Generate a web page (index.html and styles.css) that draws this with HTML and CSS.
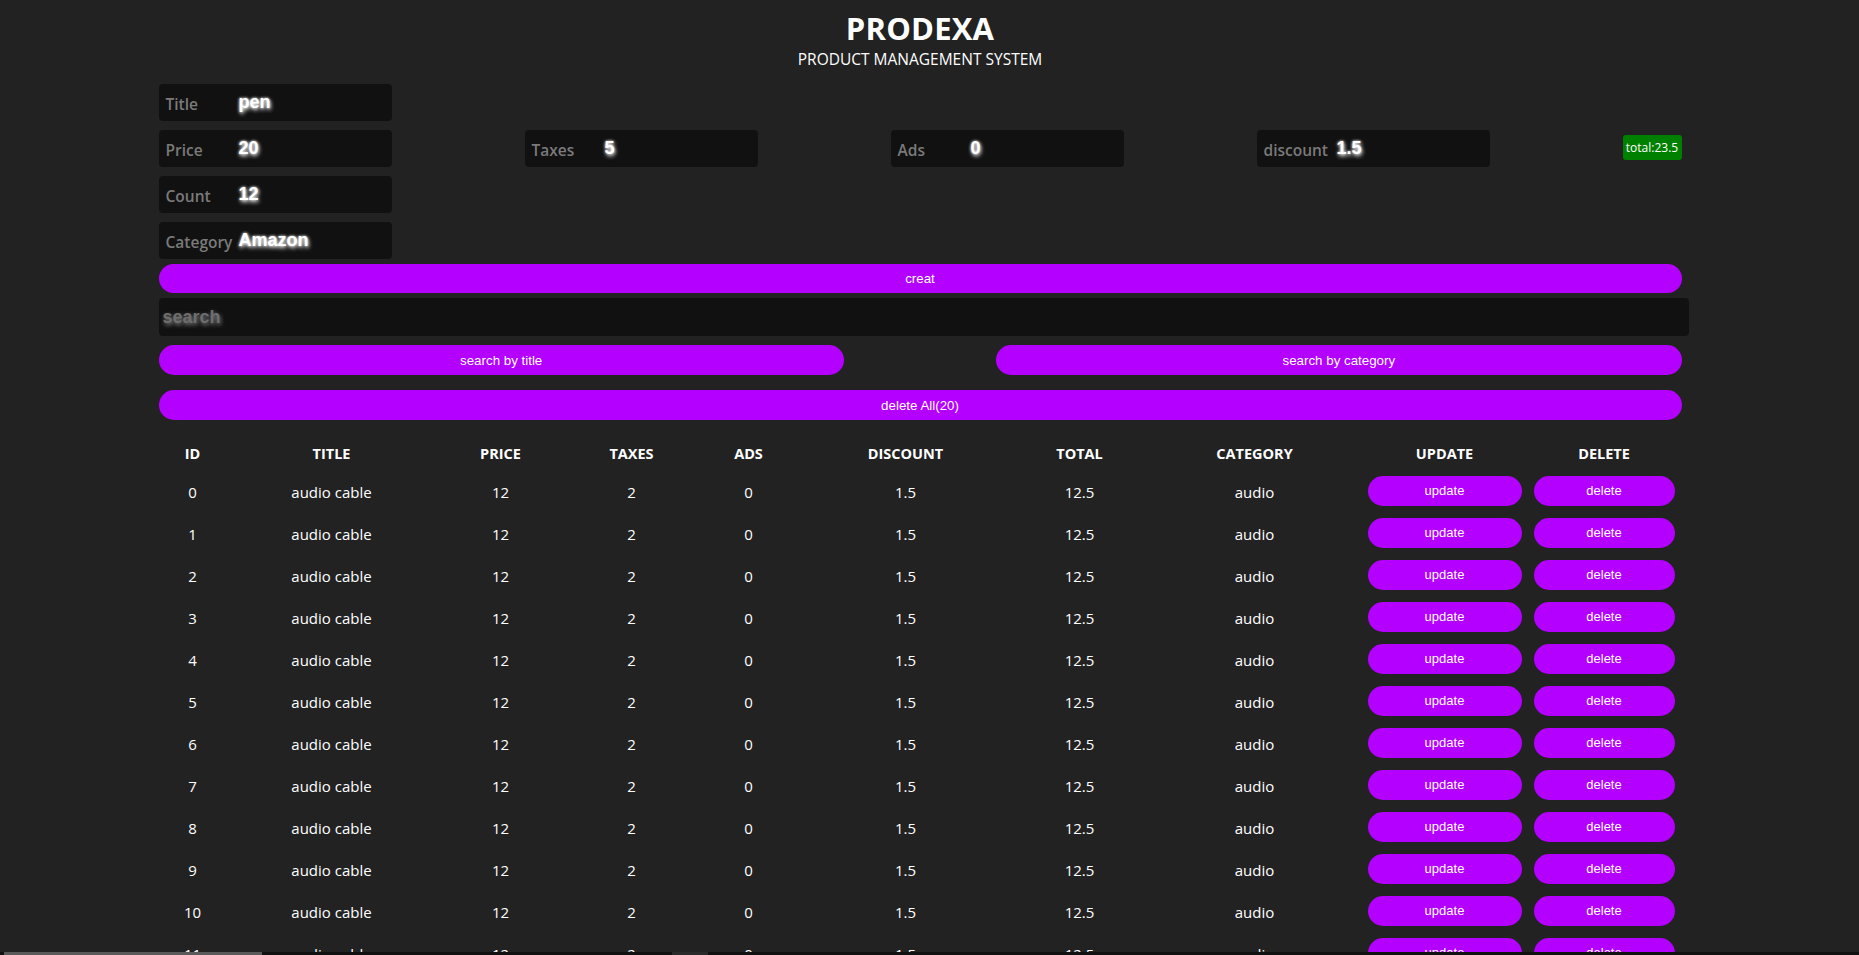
FILE: index.html
```html
<!DOCTYPE html>
<html lang="en">
<head>
<meta charset="utf-8">
<title>PRODEXA</title>
<link rel="stylesheet" href="styles.css">
</head>
<body>
<div class="wrap">
  <header class="head">
    <h1 class="brand">PRODEXA</h1>
    <p class="tagline">PRODUCT MANAGEMENT SYSTEM</p>
  </header>

  <div class="inputs">
    <div class="field"><span class="lbl">Title</span><span class="val">pen</span></div>
    <div class="price-row">
      <div class="field"><span class="lbl">Price</span><span class="val">20</span></div>
      <div class="field"><span class="lbl">Taxes</span><span class="val">5</span></div>
      <div class="field"><span class="lbl">Ads</span><span class="val">0</span></div>
      <div class="field"><span class="lbl">discount</span><span class="val">1.5</span></div>
      <div class="total">total:23.5</div>
    </div>
    <div class="field"><span class="lbl">Count</span><span class="val">12</span></div>
    <div class="field"><span class="lbl">Category</span><span class="val">Amazon</span></div>
  </div>

  <button class="btn btn-full btn-creat">creat</button>
  <div class="search"><span class="ph">search</span></div>
  <div class="search-btns">
    <button class="btn btn-half">search by title</button>
    <button class="btn btn-half">search by category</button>
  </div>
  <button class="btn btn-full btn-del">delete All(20)</button>

  <table class="tbl">
    <colgroup>
      <col class="c-id"><col class="c-title"><col class="c-price"><col class="c-tax"><col class="c-ads">
      <col class="c-disc"><col class="c-total"><col class="c-cat"><col class="c-upd"><col class="c-del">
    </colgroup>
    <thead>
      <tr><th>ID</th><th>TITLE</th><th>PRICE</th><th>TAXES</th><th>ADS</th><th>DISCOUNT</th><th>TOTAL</th><th>CATEGORY</th><th>UPDATE</th><th>DELETE</th></tr>
    </thead>
    <tbody>
      <tr><td>0</td><td>audio cable</td><td>12</td><td>2</td><td>0</td><td>1.5</td><td>12.5</td><td>audio</td><td><button class="btn btn-row btn-upd">update</button></td><td><button class="btn btn-row btn-rm">delete</button></td></tr>
      <tr><td>1</td><td>audio cable</td><td>12</td><td>2</td><td>0</td><td>1.5</td><td>12.5</td><td>audio</td><td><button class="btn btn-row btn-upd">update</button></td><td><button class="btn btn-row btn-rm">delete</button></td></tr>
      <tr><td>2</td><td>audio cable</td><td>12</td><td>2</td><td>0</td><td>1.5</td><td>12.5</td><td>audio</td><td><button class="btn btn-row btn-upd">update</button></td><td><button class="btn btn-row btn-rm">delete</button></td></tr>
      <tr><td>3</td><td>audio cable</td><td>12</td><td>2</td><td>0</td><td>1.5</td><td>12.5</td><td>audio</td><td><button class="btn btn-row btn-upd">update</button></td><td><button class="btn btn-row btn-rm">delete</button></td></tr>
      <tr><td>4</td><td>audio cable</td><td>12</td><td>2</td><td>0</td><td>1.5</td><td>12.5</td><td>audio</td><td><button class="btn btn-row btn-upd">update</button></td><td><button class="btn btn-row btn-rm">delete</button></td></tr>
      <tr><td>5</td><td>audio cable</td><td>12</td><td>2</td><td>0</td><td>1.5</td><td>12.5</td><td>audio</td><td><button class="btn btn-row btn-upd">update</button></td><td><button class="btn btn-row btn-rm">delete</button></td></tr>
      <tr><td>6</td><td>audio cable</td><td>12</td><td>2</td><td>0</td><td>1.5</td><td>12.5</td><td>audio</td><td><button class="btn btn-row btn-upd">update</button></td><td><button class="btn btn-row btn-rm">delete</button></td></tr>
      <tr><td>7</td><td>audio cable</td><td>12</td><td>2</td><td>0</td><td>1.5</td><td>12.5</td><td>audio</td><td><button class="btn btn-row btn-upd">update</button></td><td><button class="btn btn-row btn-rm">delete</button></td></tr>
      <tr><td>8</td><td>audio cable</td><td>12</td><td>2</td><td>0</td><td>1.5</td><td>12.5</td><td>audio</td><td><button class="btn btn-row btn-upd">update</button></td><td><button class="btn btn-row btn-rm">delete</button></td></tr>
      <tr><td>9</td><td>audio cable</td><td>12</td><td>2</td><td>0</td><td>1.5</td><td>12.5</td><td>audio</td><td><button class="btn btn-row btn-upd">update</button></td><td><button class="btn btn-row btn-rm">delete</button></td></tr>
      <tr><td>10</td><td>audio cable</td><td>12</td><td>2</td><td>0</td><td>1.5</td><td>12.5</td><td>audio</td><td><button class="btn btn-row btn-upd">update</button></td><td><button class="btn btn-row btn-rm">delete</button></td></tr>
      <tr><td>11</td><td>audio cable</td><td>12</td><td>2</td><td>0</td><td>1.5</td><td>12.5</td><td>audio</td><td><button class="btn btn-row btn-upd">update</button></td><td><button class="btn btn-row btn-rm">delete</button></td></tr>
      <tr><td>12</td><td>audio cable</td><td>12</td><td>2</td><td>0</td><td>1.5</td><td>12.5</td><td>audio</td><td><button class="btn btn-row btn-upd">update</button></td><td><button class="btn btn-row btn-rm">delete</button></td></tr>
      <tr><td>13</td><td>audio cable</td><td>12</td><td>2</td><td>0</td><td>1.5</td><td>12.5</td><td>audio</td><td><button class="btn btn-row btn-upd">update</button></td><td><button class="btn btn-row btn-rm">delete</button></td></tr>
      <tr><td>14</td><td>audio cable</td><td>12</td><td>2</td><td>0</td><td>1.5</td><td>12.5</td><td>audio</td><td><button class="btn btn-row btn-upd">update</button></td><td><button class="btn btn-row btn-rm">delete</button></td></tr>
      <tr><td>15</td><td>audio cable</td><td>12</td><td>2</td><td>0</td><td>1.5</td><td>12.5</td><td>audio</td><td><button class="btn btn-row btn-upd">update</button></td><td><button class="btn btn-row btn-rm">delete</button></td></tr>
      <tr><td>16</td><td>audio cable</td><td>12</td><td>2</td><td>0</td><td>1.5</td><td>12.5</td><td>audio</td><td><button class="btn btn-row btn-upd">update</button></td><td><button class="btn btn-row btn-rm">delete</button></td></tr>
      <tr><td>17</td><td>audio cable</td><td>12</td><td>2</td><td>0</td><td>1.5</td><td>12.5</td><td>audio</td><td><button class="btn btn-row btn-upd">update</button></td><td><button class="btn btn-row btn-rm">delete</button></td></tr>
      <tr><td>18</td><td>audio cable</td><td>12</td><td>2</td><td>0</td><td>1.5</td><td>12.5</td><td>audio</td><td><button class="btn btn-row btn-upd">update</button></td><td><button class="btn btn-row btn-rm">delete</button></td></tr>
      <tr><td>19</td><td>audio cable</td><td>12</td><td>2</td><td>0</td><td>1.5</td><td>12.5</td><td>audio</td><td><button class="btn btn-row btn-upd">update</button></td><td><button class="btn btn-row btn-rm">delete</button></td></tr>
    </tbody>
  </table>
</div>
<div class="hscroll"><div class="hthumb"></div><div class="hmark"></div></div>
</body>
</html>
```

FILE: styles.css
```css
html, body {
  background: #222222;
}
body {
  margin: 0;
  padding: 0 19px 0 0;
  color: #ffffff;
  font-family: "Open Sans", "Noto Sans", sans-serif;
  overflow: hidden;
}
.wrap {
  width: 1523px;
  margin: 0 auto;
}
.head {
  text-align: center;
  padding-top: 10px;
}
.brand {
  margin: 0;
  font-size: 31px;
  font-weight: 700;
  line-height: 36px;
  letter-spacing: 0.2px;
}
.tagline {
  margin: 4px 0 0;
  font-size: 15.5px;
  line-height: 18px;
}
.inputs {
  margin-top: 16px;
  display: flex;
  flex-direction: column;
  gap: 9px;
}
.price-row {
  display: flex;
  justify-content: space-between;
  align-items: center;
}
.field {
  width: 233px;
  height: 37px;
  background: #111111;
  border-radius: 4px;
  display: flex;
  align-items: center;
  box-sizing: border-box;
  padding-left: 7px;
}
.lbl {
  width: 73px;
  color: #7a7a7a;
  font-family: "Open Sans", sans-serif;
  font-weight: 600;
  font-size: 15.5px;
  flex: none;
  padding-top: 2px;
}
.val {
  color: #ffffff;
  font-family: "Liberation Sans", Arial, sans-serif;
  font-weight: 700;
  font-size: 18px;
  text-shadow: 1px 2px 4px #ffffff, 0 0 3px #ffffff;
}
.total {
  width: 59px;
  height: 25px;
  background: #008000;
  border-radius: 3px;
  font-size: 12px;
  line-height: 25px;
  text-align: center;
  color: #fff;
  white-space: nowrap;
  margin-top: -3px;
}
.btn {
  background: #b400ff;
  border: none;
  color: #ffffff;
  font-family: "Liberation Sans", Arial, sans-serif;
  font-size: 13.33px;
  border-radius: 15px;
  padding: 0;
  cursor: pointer;
}
.btn-full {
  display: block;
  width: 100%;
  height: 29px;
}
.btn-creat {
  margin-top: 5px;
}
.search {
  margin-top: 5px;
  width: calc(100% + 7px);
  height: 38px;
  background: #111111;
  border-radius: 4px;
  display: flex;
  align-items: center;
  padding-left: 4px;
  box-sizing: border-box;
}
.ph {
  color: #6e6e6e;
  font-family: "Liberation Sans", Arial, sans-serif;
  font-weight: 700;
  font-size: 18px;
  text-shadow: 1px 2px 4px #888888;
}
.search-btns {
  margin-top: 9px;
  display: flex;
  justify-content: space-between;
}
.btn-half {
  width: 45%;
  height: 30px;
}
.btn-del {
  margin-top: 15px;
  height: 30px;
}
.tbl {
  margin-top: 17px;
  width: 100%;
  border-collapse: collapse;
  table-layout: fixed;
}
.c-id { width: 68px; }
.c-title { width: 210px; }
.c-price { width: 128px; }
.c-tax { width: 134px; }
.c-ads { width: 100px; }
.c-disc { width: 214px; }
.c-total { width: 134px; }
.c-cat { width: 216px; }
.c-upd { width: 164px; }
.c-del { width: 155px; }
.tbl th {
  font-weight: 700;
  font-size: 14.5px;
  height: 33px;
  padding: 0;
  text-align: center;
}
.tbl td {
  font-size: 15px;
  height: 41px;
  padding: 1px 0 0;
  text-align: center;
}
.btn-row {
  height: 30px;
  font-size: 13px;
  vertical-align: middle;
  margin-top: -2px;
}
.btn-upd { width: 154px; }
.btn-rm { width: 141px; }
.hscroll {
  position: fixed;
  left: 0;
  right: 0;
  bottom: 0;
  height: 3px;
  background: #111111;
}
.hthumb {
  position: absolute;
  left: 4px;
  top: 0;
  width: 258px;
  height: 3px;
  background: #5a5a5a;
}
.hmark {
  position: absolute;
  left: 672px;
  top: 0;
  width: 36px;
  height: 3px;
  background: #2a2a2a;
}
```
